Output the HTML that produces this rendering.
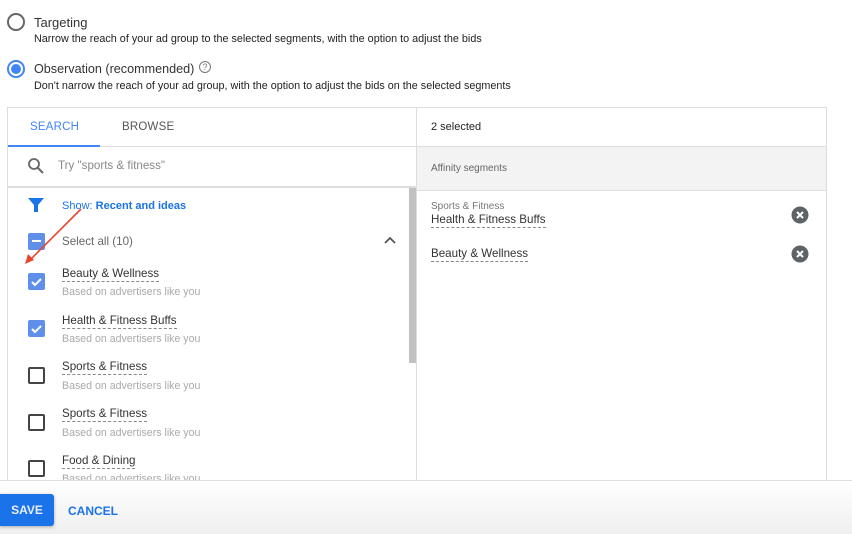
<!DOCTYPE html>
<html><head><style>
*{box-sizing:border-box;margin:0;padding:0}
body{width:852px;height:534px;position:relative;background:#fff;font-family:"Liberation Sans",Arial,sans-serif;overflow:hidden;color:#202124}
.a{position:absolute}
.t13{font-size:13px}
.t11{font-size:10.8px}
.dash{border-bottom:1px dashed #888;padding-bottom:1px}
.cb{position:absolute;left:28px;width:17px;height:17px;border-radius:2px}
.cbon{background:#5f8fe8}
.cboff{border:2px solid #444}
.sub{color:#aaa;font-size:10.6px;position:absolute;left:62px}
.nm{font-size:11.6px;position:absolute;left:62px;color:#333}
</style></head><body>
<div class="a" style="left:7px;top:13px;width:18px;height:18px;border:2px solid #666;border-radius:50%"></div>
<div class="a t13" style="left:34px;top:15px;color:#333">Targeting</div>
<div class="a t11" style="left:34px;top:33px;color:#222">Narrow the reach of your ad group to the selected segments, with the option to adjust the bids</div>
<div class="a" style="left:7px;top:60px;width:18px;height:18px;border:2px solid #4285f4;border-radius:50%"></div>
<div class="a" style="left:11px;top:64px;width:10px;height:10px;background:#4285f4;border-radius:50%"></div>
<div class="a" style="left:34px;top:62px;color:#333;font-size:12.6px">Observation (recommended)</div>
<div class="a" style="left:199px;top:61px;width:12px;height:12px;border:1px solid #777;border-radius:50%;font-size:9px;text-align:center;line-height:10px;color:#777">?</div>
<div class="a t11" style="left:34px;top:80px;color:#222">Don't narrow the reach of your ad group, with the option to adjust the bids on the selected segments</div>
<div class="a" style="left:7px;top:107px;width:820px;height:380px;border:1px solid #ddd"></div>
<div class="a" style="left:416px;top:107px;width:1px;height:380px;background:#ddd"></div>
<div class="a" style="left:8px;top:146px;width:408px;height:1px;background:#ddd"></div>
<div class="a" style="left:8px;top:145px;width:92px;height:2px;background:#4285f4"></div>
<div class="a" style="left:30px;top:121px;font-size:11.5px;color:#4285f4;letter-spacing:.2px">SEARCH</div>
<div class="a" style="left:122px;top:121px;font-size:11.5px;color:#555;letter-spacing:.2px">BROWSE</div>
<svg class="a" style="left:27px;top:157px" width="18" height="18" viewBox="0 0 18 18"><circle cx="7" cy="7" r="5" fill="none" stroke="#666" stroke-width="1.8"/><path d="M11 11l5 5" stroke="#666" stroke-width="2"/></svg>
<div class="a" style="left:58px;top:159px;font-size:11.6px;color:#888">Try "sports &amp; fitness"</div>
<div class="a" style="left:8px;top:186px;width:408px;height:2px;background:#ddd"></div>
<div class="a" style="left:409px;top:188px;width:7px;height:175px;background:#c1c1c1"></div>
<svg class="a" style="left:28px;top:197px" width="16" height="16" viewBox="0 0 16 16"><path d="M0 1h16l-6 7v7h-4v-7z" fill="#1a73e8"/></svg>
<div class="a" style="left:62px;top:200px;font-size:11px;color:#1a73e8">Show: <b>Recent and ideas</b></div>
<div class="cb cbon" style="top:233px"><div style="position:absolute;left:4px;top:7px;width:9px;height:2px;background:#fff"></div></div>
<div class="a" style="left:62px;top:235px;font-size:11.6px;color:#666">Select all (10)</div>
<svg class="a" style="left:384px;top:236px" width="12" height="8" viewBox="0 0 12 8"><path d="M1 7l5-5 5 5" fill="none" stroke="#555" stroke-width="1.8"/></svg>
<div class="cb cbon" style="top:273px"><svg width="17" height="17"><path d="M4 9l3 3 6-6" stroke="#fff" stroke-width="2" fill="none"/></svg></div>
<div class="nm" style="top:267px"><span class="dash">Beauty &amp; Wellness</span></div><div class="sub" style="top:286px">Based on advertisers like you</div>
<div class="cb cbon" style="top:320px"><svg width="17" height="17"><path d="M4 9l3 3 6-6" stroke="#fff" stroke-width="2" fill="none"/></svg></div>
<div class="nm" style="top:314px"><span class="dash">Health &amp; Fitness Buffs</span></div><div class="sub" style="top:333px">Based on advertisers like you</div>
<div class="cb cboff" style="top:367px"></div>
<div class="nm" style="top:360px"><span class="dash">Sports &amp; Fitness</span></div><div class="sub" style="top:380px">Based on advertisers like you</div>
<div class="cb cboff" style="top:414px"></div>
<div class="nm" style="top:407px"><span class="dash">Sports &amp; Fitness</span></div><div class="sub" style="top:427px">Based on advertisers like you</div>
<div class="cb cboff" style="top:460px"></div>
<div class="nm" style="top:454px"><span class="dash">Food &amp; Dining</span></div><div class="sub" style="top:473px">Based on advertisers like you</div>
<svg class="a" style="left:0;top:0" width="120" height="280"><path d="M81 209L31 259" stroke="#e8472f" stroke-width="1.6"/><path d="M25 264l3-10 6 6z" fill="#e8472f"/></svg>
<div class="a" style="left:431px;top:121px;font-size:11px;color:#222">2 selected</div>
<div class="a" style="left:417px;top:146px;width:409px;height:45px;background:#f3f3f3;border-top:1px solid #ddd;border-bottom:1px solid #ddd"></div>
<div class="a" style="left:431px;top:163px;font-size:10px;color:#666">Affinity segments</div>
<div class="a" style="left:431px;top:201px;font-size:10px;color:#777">Sports &amp; Fitness</div>
<div class="a" style="left:431px;top:213px;font-size:11.6px;color:#333"><span class="dash">Health &amp; Fitness Buffs</span></div>
<div class="a" style="left:431px;top:247px;font-size:11.6px;color:#333"><span class="dash">Beauty &amp; Wellness</span></div>
<svg class="a" style="left:791px;top:206px" width="18" height="18"><circle cx="9" cy="9" r="8.5" fill="#5f6368"/><path d="M6 6l6 6M12 6l-6 6" stroke="#fff" stroke-width="2"/></svg>
<svg class="a" style="left:791px;top:245px" width="18" height="18"><circle cx="9" cy="9" r="8.5" fill="#5f6368"/><path d="M6 6l6 6M12 6l-6 6" stroke="#fff" stroke-width="2"/></svg>
<div class="a" style="left:0;top:480px;width:852px;height:54px;background:linear-gradient(#fff,#efefef);border-top:1px solid #ddd"></div>
<div class="a" style="left:0;top:494px;width:54px;height:32px;background:#1a73e8;border-radius:0 3px 3px 0;box-shadow:0 1px 3px rgba(0,0,0,.3);color:#e8eefa;font-size:12px;font-weight:bold;line-height:32px;text-align:center">SAVE</div>
<div class="a" style="left:68px;top:504px;font-size:12px;font-weight:bold;color:#1a73e8">CANCEL</div>
</body></html>
